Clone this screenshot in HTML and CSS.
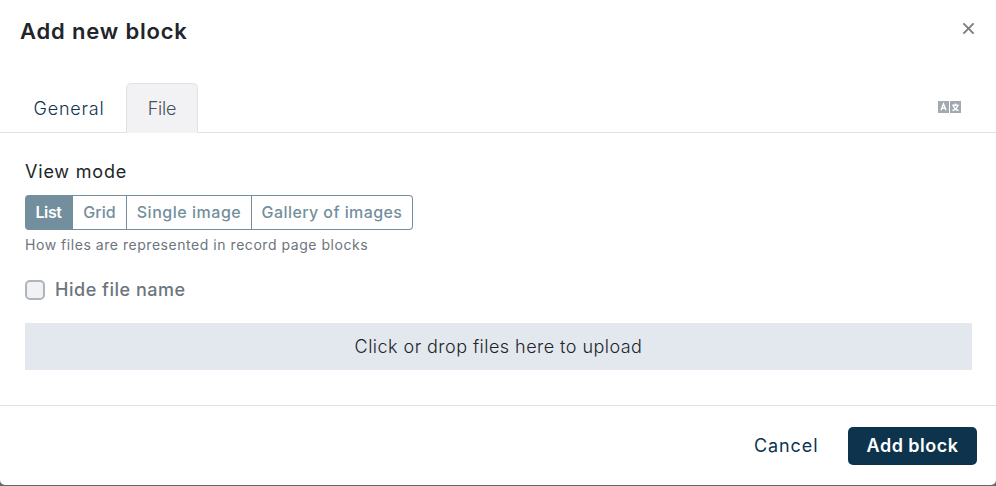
FILE: index.html
```html
<!DOCTYPE html>
<html lang="en">
<head>
<meta charset="utf-8">
<title>Add new block</title>
<link rel="stylesheet" href="styles.css">
</head>
<body>
<div class="modal" role="dialog" aria-labelledby="title">
  <header class="modal-header">
    <h1 id="title" class="title">Add new block</h1>
    <button class="close" aria-label="Close">
      <svg width="13" height="13" viewBox="0 0 13 13"><path d="M1.400 1.400 11.600 11.600M11.600 1.400 1.400 11.600"/></svg>
    </button>
  </header>
  <nav class="tabs">
    <a class="tab">General</a>
    <a class="tab active">File</a>
    <svg class="translate" width="23" height="12" viewBox="0 0 23 12">
      <path class="tile" d="M0 0h11v12H0zM12 0h11v12H12z"/>
      <path class="glyph" d="M3 9.300 5.500 3 8 9.300M3.800 7.300h3.400M14.300 4.200h6.400M17.500 2.400v1.800M19.500 4.800C19 7 17 8.800 14.500 9.500M15.500 4.800C16 7 18 8.800 20.500 9.500"/>
    </svg>
  </nav>
  <main class="modal-body">
    <div class="label">View mode</div>
    <div class="group">
      <button class="option selected">List</button>
      <button class="option o-grid">Grid</button>
      <button class="option o-single">Single image</button>
      <button class="option o-gallery">Gallery of images</button>
    </div>
    <p class="help">How files are represented in record page blocks</p>
    <label class="check"><input type="checkbox">Hide file name</label>
    <div class="dropzone">Click or drop files here to upload</div>
  </main>
  <footer class="modal-footer">
    <button class="cancel">Cancel</button>
    <button class="submit">Add block</button>
  </footer>
</div>
</body>
</html>
```
FILE: styles.css
```css
* { box-sizing: border-box; }
body {
  margin: 0;
  height: 486px;
  overflow: hidden;
  background: #666;
  color: #212529;
  font: 400 18px/27px Inter, "Liberation Sans", sans-serif;
  white-space: nowrap;
}
button {
  margin: 0;
  padding: 0;
  border: 0;
  background: none;
  font: inherit;
  color: inherit;
}
.modal {
  display: flex;
  flex-direction: column;
  height: 485px;
  background: #fff;
  border-radius: 0 0 5px 5px;
}
.modal-header {
  display: flex;
  justify-content: space-between;
  align-items: flex-start;
  height: 83px;
  padding: 14px 21px 0 20px;
}
.title {
  margin: 0;
  font-size: 22px;
  font-weight: 600;
  line-height: 34px;
  letter-spacing: 0.82px;
}
.close { height: 13px; margin-top: 8px; line-height: 0; }
.close path { stroke: #7d7d7d; stroke-width: 1.9; fill: none; }
.tabs {
  display: flex;
  height: 50px;
  padding: 0 35px 0 12px;
  border-bottom: 1px solid #dee2e6;
}
.tab {
  display: flex;
  justify-content: center;
  align-items: center;
  width: 114px;
  height: 50px;
  color: #0d3550;
  font-weight: 350;
  letter-spacing: 0.8px;
}
.tab.active {
  width: 72px;
  border: 1px solid #dee2e6;
  border-bottom-color: #f2f2f5;
  border-radius: 5px 5px 0 0;
  background: #f2f2f5;
  color: #495057;
  letter-spacing: -0.2px;
}
.translate { margin: 18px 0 0 auto; }
.tile { fill: #a3a9b0; }
.glyph { fill: none; stroke: #fff; stroke-width: 1.4; }
.modal-body {
  height: 272px;
  padding: 25px 24px 0 25px;
}
.label { height: 37px; letter-spacing: 0.8px; }
.group { display: flex; height: 35px; }
.option {
  display: flex;
  justify-content: center;
  align-items: center;
  border: 1px solid #738f9d;
  border-left: 0;
  color: #738f9d;
  font-size: 16px;
  font-weight: 500;
}
.selected {
  width: 48px;
  border-radius: 4px 0 0 4px;
  background: #738f9d;
  color: #fff;
  font-weight: 600;
  letter-spacing: -0.4px;
}
.o-grid { width: 54px; }
.o-single { width: 125px; letter-spacing: 0.52px; }
.o-gallery { width: 161px; border-radius: 0 4px 4px 0; letter-spacing: 0.42px; }
.help {
  margin: 4px 0 0;
  color: #6c757d;
  font-size: 14px;
  line-height: 22px;
  letter-spacing: 0.54px;
}
.check {
  display: flex;
  align-items: center;
  gap: 10px;
  height: 27px;
  margin-top: 20px;
  color: #6c757d;
  font-weight: 500;
  letter-spacing: 0.52px;
}
.check input {
  appearance: none;
  width: 20px;
  height: 20px;
  margin: 0;
  border: 2px solid #adb5bd;
  border-radius: 5px;
  background: #f2f2f5;
}
.dropzone {
  display: flex;
  justify-content: center;
  align-items: center;
  height: 47px;
  margin-top: 20px;
  background: #e3e7ee;
  font-weight: 350;
  letter-spacing: 0.46px;
}
.modal-footer {
  display: flex;
  justify-content: flex-end;
  align-items: center;
  gap: 30px;
  height: 80px;
  padding-right: 19px;
  border-top: 1px solid #dee2e6;
}
.cancel { width: 64px; color: #0d3550; letter-spacing: 0.9px; }
.submit {
  width: 129px;
  height: 38px;
  border-radius: 5px;
  background: #0d344c;
  color: #fff;
  font-weight: 600;
  letter-spacing: 0.48px;
}
```
